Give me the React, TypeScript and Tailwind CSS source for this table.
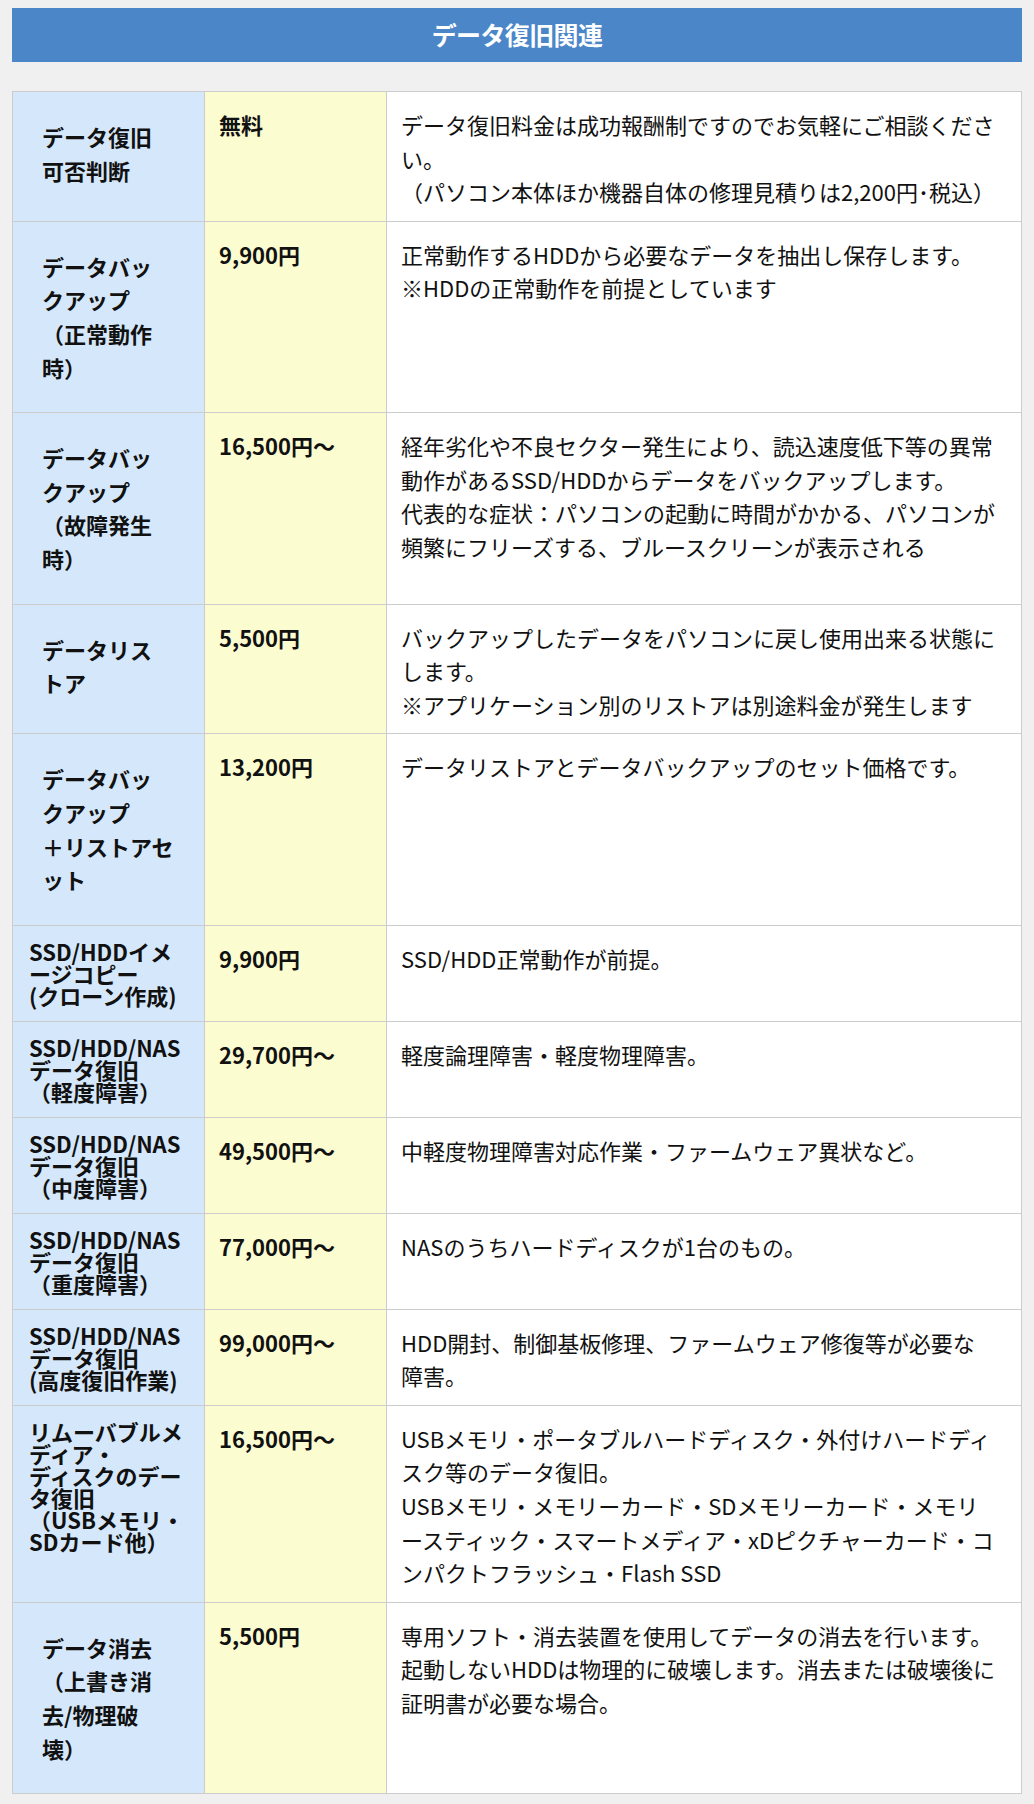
type Row = {
  label: string[]
  compact?: boolean
  price: string
  desc: string[]
}

const ROWS: Row[] = [
  {
    label: ["データ復旧", "可否判断"],
    price: "無料",
    desc: [
      "データ復旧料金は成功報酬制ですのでお気軽にご相談くださ",
      "い。",
      "（パソコン本体ほか機器自体の修理見積りは2,200円･税込）",
    ],
  },
  {
    label: ["データバッ", "クアップ", "（正常動作", "時）"],
    price: "9,900円",
    desc: ["正常動作するHDDから必要なデータを抽出し保存します。", "※HDDの正常動作を前提としています"],
  },
  {
    label: ["データバッ", "クアップ", "（故障発生", "時）"],
    price: "16,500円〜",
    desc: [
      "経年劣化や不良セクター発生により、読込速度低下等の異常",
      "動作があるSSD/HDDからデータをバックアップします。",
      "代表的な症状：パソコンの起動に時間がかかる、パソコンが",
      "頻繁にフリーズする、ブルースクリーンが表示される",
    ],
  },
  {
    label: ["データリス", "トア"],
    price: "5,500円",
    desc: [
      "バックアップしたデータをパソコンに戻し使用出来る状態に",
      "します。",
      "※アプリケーション別のリストアは別途料金が発生します",
    ],
  },
  {
    label: ["データバッ", "クアップ", "＋リストアセ", "ット"],
    price: "13,200円",
    desc: ["データリストアとデータバックアップのセット価格です。"],
  },
  {
    label: ["SSD/HDDイメ", "ージコピー", "(クローン作成)"],
    compact: true,
    price: "9,900円",
    desc: ["SSD/HDD正常動作が前提。"],
  },
  {
    label: ["SSD/HDD/NAS", "データ復旧", "（軽度障害）"],
    compact: true,
    price: "29,700円〜",
    desc: ["軽度論理障害・軽度物理障害。"],
  },
  {
    label: ["SSD/HDD/NAS", "データ復旧", "（中度障害）"],
    compact: true,
    price: "49,500円〜",
    desc: ["中軽度物理障害対応作業・ファームウェア異状など。"],
  },
  {
    label: ["SSD/HDD/NAS", "データ復旧", "（重度障害）"],
    compact: true,
    price: "77,000円〜",
    desc: ["NASのうちハードディスクが1台のもの。"],
  },
  {
    label: ["SSD/HDD/NAS", "データ復旧", "(高度復旧作業)"],
    compact: true,
    price: "99,000円〜",
    desc: ["HDD開封、制御基板修理、ファームウェア修復等が必要な", "障害。"],
  },
  {
    label: ["リムーバブルメ", "ディア・", "ディスクのデー", "タ復旧", "（USBメモリ・", "SDカード他）"],
    compact: true,
    price: "16,500円〜",
    desc: [
      "USBメモリ・ポータブルハードディスク・外付けハードディ",
      "スク等のデータ復旧。",
      "USBメモリ・メモリーカード・SDメモリーカード・メモリ",
      "ースティック・スマートメディア・xDピクチャーカード・コ",
      "ンパクトフラッシュ・Flash SSD",
    ],
  },
  {
    label: ["データ消去", "（上書き消", "去/物理破", "壊）"],
    price: "5,500円",
    desc: [
      "専用ソフト・消去装置を使用してデータの消去を行います。",
      "起動しないHDDは物理的に破壊します。消去または破壊後に",
      "証明書が必要な場合。",
    ],
  },
]

function Lines({ lines }: { lines: string[] }) {
  return (
    <>
      {lines.map((line, i) => (
        <span key={i} className="block whitespace-nowrap">
          {line}
        </span>
      ))}
    </>
  )
}

export default function App() {
  return (
    <div className="min-h-screen bg-[#f0f0f0] px-[12px] pt-[8px] pb-[10px] font-['Noto_Sans_CJK_JP','Noto_Sans',sans-serif] text-[#111]">
      <div className="flex h-[54px] items-center justify-center bg-[#4a86c8]">
        <h2 className="text-[25px] font-bold tracking-tight text-white">データ復旧関連</h2>
      </div>

      <table className="mt-[29px] w-full table-fixed border-collapse border border-[#cccccc]">
        <colgroup>
          <col className="w-[192px]" />
          <col className="w-[182px]" />
          <col />
        </colgroup>
        <tbody>
          {ROWS.map((row, i) => (
            <tr key={i}>
              <th
                className={
                  row.compact
                    ? "border border-[#cccccc] bg-[#d5e8fb] px-[16px] py-[14.5px] text-left align-top text-[22px] leading-[22px] font-bold"
                    : "border border-[#cccccc] bg-[#d5e8fb] px-[29px] py-[28px] text-left align-top text-[22px] leading-[33.6px] font-bold"
                }
              >
                <Lines lines={row.label} />
              </th>
              <td className="border border-[#cccccc] bg-[#fcfcd1] px-[14px] pt-[16px] pb-[12px] align-top text-[22px] leading-[33.6px] font-bold">
                {row.price}
              </td>
              <td className="border border-[#cccccc] bg-white px-[14px] pt-[16px] pb-[12px] align-top text-[22px] leading-[33.6px]">
                <Lines lines={row.desc} />
              </td>
            </tr>
          ))}
        </tbody>
      </table>
    </div>
  )
}
